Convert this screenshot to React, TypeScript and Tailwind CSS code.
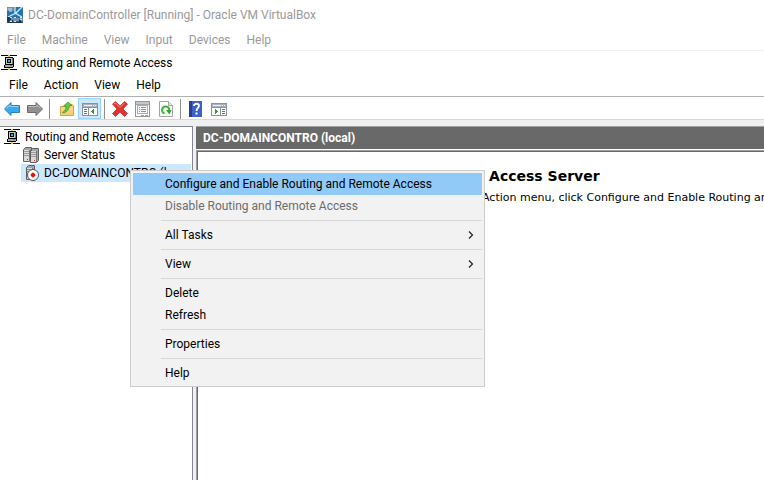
import React from "react";

const ui = "font-['Roboto','Open_Sans',sans-serif]";

function VmIcon() {
  return (
    <svg width="16" height="16" viewBox="0 0 16 16" aria-hidden="true">
      <rect width="16" height="16" rx="1" fill="#2574b0" />
      <path d="M0 0h7v4H0z" fill="#7890a2" />
      <path d="M1 2h4M2 4h3" stroke="#dbe6ee" />
      <path d="M15 0L9 6 1 10M8 0v6l7 4" stroke="#c8ecff" strokeWidth="1.300" fill="none" />
      <path d="M0 10h16v5a1 1 0 0 1-1 1H1a1 1 0 0 1-1-1z" fill="#1a3a5a" />
      <path d="M3 10.500h2v2l-2 2h2M7 10.500h2v4H7zM11 10.500v4M15 14.500v-4h-2v2h2" stroke="#dbe7f0" strokeWidth="1" fill="none" />
    </svg>
  );
}

function RouterIcon() {
  return (
    <svg width="16" height="16" viewBox="0 0 16 16" shapeRendering="crispEdges" aria-hidden="true">
      <path d="M0 0h16v1H0zM0 14h16v1H0z" fill="#000" />
      <path d="M7 0h2v2H7zM7 13h2v2H7z" fill="#ead200" />
      <path d="M4 2h8v1h1v9h-1v1H3v-3h1z" fill="#000" />
      <path d="M5 3h6v6H5z" fill="#c4c9c9" />
      <path d="M6 4h4v4H6z" fill="#000" />
      <path d="M7 5h2v2H7z" fill="#18c5bd" />
      <path d="M11 3h1v6h-1z" fill="#777" />
      <path d="M4 10h8v2H4z" fill="#a9a9a9" />
      <path d="M9 10h2v1H9z" fill="#43a043" />
    </svg>
  );
}

function ServersIcon() {
  return (
    <svg width="16" height="16" viewBox="0 0 16 16" aria-hidden="true">
      <path d="M.5 2.500L2.500.500h6v12l-2 2h-6zM7.500 3.500l2-2h6v12l-2 2h-6z" fill="#a5a5a5" stroke="#606060" />
      <path d="M1 3h5v11H1zM8 4h5v11H8z" fill="#dadada" />
      <path d="M1 4.500h5M1 6.500h5M1 8.500h5M8 5.500h5M8 7.500h5M8 9.500h5" stroke="#9a9a9a" />
      <path d="M6.500 3v11M13.500 4v11" stroke="#777" />
      <path d="M4 12h1v1H4zM11 13h1v1h-1z" fill="#d33030" />
    </svg>
  );
}

function StoppedServerIcon() {
  return (
    <svg width="16" height="16" viewBox="0 0 16 16" aria-hidden="true">
      <path d="M3.500 2.500l2-2h6v12l-2 2h-6z" fill="#a5a5a5" stroke="#606060" />
      <path d="M4 3h5v11H4z" fill="#dadada" />
      <path d="M4 4.500h5M4 6.500h5" stroke="#888" />
      <path d="M9.500 3v5" stroke="#777" />
      <circle cx="10" cy="10" r="5.500" fill="#fff" stroke="#555" strokeWidth="1" />
      <path d="M9 8h2v1h1v2h-1v1H9v-1H8V9h1z" fill="#ee1010" stroke="#ee1010" strokeWidth=".5" />
    </svg>
  );
}

function ArrowIcon({ forward = false }: { forward?: boolean }) {
  return (
    <svg width="16" height="16" viewBox="0 0 16 16" aria-hidden="true">
      <path
        d={forward ? "M15.500 8L9 1.500v3H.500v7H9v3z" : "M.500 8L7 1.500v3h8.500v7H7v3z"}
        fill={forward ? "#919191" : "#38a9ec"}
        stroke={forward ? "#6a6a6a" : "#2f7fbe"}
      />
      <path
        d={forward ? "M1.500 5.500H10V4L13.500 7.500" : "M2.500 7.500L6 4v1.500h8.500"}
        fill="none"
        stroke={forward ? "#bcbcbc" : "#8ad7fb"}
      />
    </svg>
  );
}

function FolderUpIcon() {
  return (
    <svg width="16" height="16" viewBox="0 0 16 16" aria-hidden="true">
      <path d="M1.500 5.500h6l1-2h5l1 1v10h-13z" fill="#f3d27a" stroke="#cda550" />
      <path d="M2 8h12" stroke="#fbe6a2" />
      <path d="M3.500 11.500C6 10 7 8 7 5H4.500l4.500-4L13 4.500h-2.500C10.500 8 8 11 4.500 12z" fill="#62c940" stroke="#389428" strokeWidth=".7" />
    </svg>
  );
}

function PaneIcon({ mirrored = false }: { mirrored?: boolean }) {
  return (
    <svg width="16" height="14" viewBox="0 0 16 14" shapeRendering="crispEdges" aria-hidden="true">
      <path d="M.5 1.500h15v12H.5z" fill="#fff" stroke="#8a929c" />
      <path d="M1 2h14v3H1z" fill="#a9b3bd" />
      <path d="M2 3.500h8M11 3.500h1M13 3.500h1" stroke="#eef2f5" />
      <path d="M0 5.500h16" stroke="#8a929c" />
      {mirrored ? (
        <>
          <path d="M9.500 6v7" stroke="#8b93a0" />
          <path d="M11 7.500h3M11 9.500h3M11 11.500h3" stroke="#3878c0" />
          <path d="M4 7v5l3-2.500z" fill="#27a427" />
        </>
      ) : (
        <>
          <path d="M6.500 6v7" stroke="#8b93a0" />
          <path d="M2 7.500h3M2 9.500h3M2 11.500h3" stroke="#3878c0" />
          <path d="M12 7v5L9 9.500z" fill="#27a427" />
        </>
      )}
    </svg>
  );
}

function DeleteIcon() {
  return (
    <svg width="16" height="16" viewBox="0 0 16 16" aria-hidden="true">
      <path d="M.5 3L3.500.500 8 5l4.500-4.500L15.500 3 11 8l4.500 4.500-3 3L8 11l-4.500 4.500-3-3L5 8z" fill="#e0332c" stroke="#b92020" strokeWidth=".7" />
      <path d="M2 3l1.500-1L8 6.500 12.500 2" stroke="#f58a7e" fill="none" />
    </svg>
  );
}

function PropertiesIcon() {
  return (
    <svg width="16" height="16" viewBox="0 0 16 16" shapeRendering="crispEdges" aria-hidden="true">
      <path d="M.500.500h14v15h-14z" fill="#fff" stroke="#959595" />
      <path d="M1 1h13v2H1z" fill="#c5c9cc" />
      <path d="M1 3.500h13" stroke="#a2a7ab" />
      <path d="M2.500 4.500h10v8h-10z" fill="#f5f6f7" stroke="#a6adb3" />
      <path d="M4 6.500h1M6 6.500h5M4 8.500h1M6 8.500h5M4 10.500h1M6 10.500h5" stroke="#8495a3" />
      <path d="M6 14.500h3M10 14.500h3" stroke="#63b9e5" />
    </svg>
  );
}

function RefreshIcon() {
  return (
    <svg width="14" height="16" viewBox="0 0 14 16" aria-hidden="true">
      <path d="M.5.500h9l4 4v11H.5z" fill="#fff" stroke="#a3a3a3" />
      <path d="M9.500.500v4h4" fill="#e8e8e8" stroke="#a3a3a3" />
      <path d="M5.500 12.500A3.600 3.600 0 1 1 10.300 9" fill="none" stroke="#3cb53a" strokeWidth="2" />
      <path d="M7 9h5.500l-2 4.500z" fill="#2ca72d" />
    </svg>
  );
}

function HelpIcon() {
  return (
    <svg width="13" height="16" viewBox="0 0 13 16" aria-hidden="true">
      <path d="M0 0h13v16H0z" fill="#3b62c4" />
      <path d="M0 0h3v16H0z" fill="#26408e" />
      <path d="M5 5c0-3 5-3 5 0 0 2-2.500 2-2.500 5" fill="none" stroke="#fff" strokeWidth="1.800" />
      <path d="M6.500 11.500h2v2h-2z" fill="#fff" />
    </svg>
  );
}

function ToolButton({ label, active = false, children }: { label: string; active?: boolean; children: React.ReactNode }) {
  return (
    <button
      aria-label={label}
      className={
        active
          ? "flex h-[21px] w-[23px] items-center justify-center border border-[#99d1ff] bg-[#cce8ff]"
          : "flex h-[21px] w-[23px] items-center justify-center"
      }
    >
      {children}
    </button>
  );
}

function ToolDivider() {
  return <div className="mx-[3px] h-5 w-px bg-[#8d8d8d]" />;
}

function MenuItem({ label, state, submenu = false }: { label: string; state?: "hover" | "disabled"; submenu?: boolean }) {
  return (
    <button
      role="menuitem"
      disabled={state === "disabled"}
      className={
        "flex h-[22px] w-full items-center justify-between pl-8 pr-2 text-left whitespace-nowrap " +
        (state === "hover" ? "bg-[#91c9f7]" : state === "disabled" ? "text-[#6d6d6d]" : "")
      }
    >
      {label}
      {submenu && (
        <svg width="6" height="8" viewBox="0 0 6 8" aria-hidden="true">
          <path d="M1 .500L4.500 4 1 7.500" fill="none" stroke="#222" strokeWidth="1.200" />
        </svg>
      )}
    </button>
  );
}

function Separator() {
  return <div role="separator" className="ml-7 h-[7px] py-[3px]"><div className="h-px bg-[#d7d7d7]" /></div>;
}

export default function App() {
  return (
    <div className={`relative flex min-h-screen flex-col overflow-hidden bg-white text-[12px] leading-4 text-black ${ui}`}>
      <header className="text-[#999999]">
        <div className="flex h-[30px] items-center gap-[5px] pl-[7px]">
          <VmIcon />
          <span>DC-DomainController [Running] - Oracle VM VirtualBox</span>
        </div>
        <nav aria-label="Virtual machine" className="flex h-[21px] items-center gap-4 border-b border-[#f0f0f0] pl-[7px]">
          {["File", "Machine", "View", "Input", "Devices", "Help"].map((m) => (
            <button key={m}>{m}</button>
          ))}
        </nav>
      </header>

      <div className="flex h-[23px] items-center gap-[5px] pl-px">
        <RouterIcon />
        <span>Routing and Remote Access</span>
      </div>
      <nav aria-label="Console" className="flex h-[22px] items-center gap-4 pl-[9px]">
        {["File", "Action", "View", "Help"].map((m) => (
          <button key={m}>{m}</button>
        ))}
      </nav>

      <div role="toolbar" className="flex h-6 items-end border-y border-t-[#b0b0b0] border-b-[#d8d8d8]">
        <ToolButton label="Back"><ArrowIcon /></ToolButton>
        <ToolButton label="Forward"><ArrowIcon forward /></ToolButton>
        <ToolDivider />
        <div className="flex pl-[2px]">
          <ToolButton label="Up one level"><FolderUpIcon /></ToolButton>
          <ToolButton label="Show console tree" active><PaneIcon /></ToolButton>
        </div>
        <div className="flex items-end">
          <ToolDivider />
          <ToolButton label="Delete"><DeleteIcon /></ToolButton>
          <ToolButton label="Properties"><PropertiesIcon /></ToolButton>
          <ToolButton label="Refresh"><RefreshIcon /></ToolButton>
        </div>
        <ToolDivider />
        <ToolButton label="Help"><HelpIcon /></ToolButton>
        <ToolButton label="Show action pane"><PaneIcon mirrored /></ToolButton>
      </div>

      <div className="flex flex-1 gap-[3px] bg-[#f0f0f0] pt-[6px]">
        <aside className="w-[193px] shrink-0 border-t border-r border-[#828790] bg-white pt-px">
          <ul role="tree">
            <li role="treeitem" className="flex h-[18px] items-center gap-[5px] pl-1"><RouterIcon />Routing and Remote Access</li>
            <li role="treeitem" className="flex h-[18px] items-center gap-[5px] pl-[23px]"><ServersIcon />Server Status</li>
            <li role="treeitem" aria-selected="true" className="ml-[21px] mr-px flex h-[18px] items-center gap-[5px] bg-[#cce8ff] pl-[2px] pr-2">
              <span className="shrink-0"><StoppedServerIcon /></span>
              <span className="truncate">DC-DOMAINCONTRO (local)</span>
            </li>
          </ul>
        </aside>

        <main className="flex min-w-0 flex-1 flex-col">
          <h1 className="flex h-[23px] items-center border-t border-[#a0a0a0] bg-[#696969] pl-[7px] font-bold text-white">
            DC-DOMAINCONTRO (local)
          </h1>
          <div className="flex flex-1 border-t border-white">
            <div className="min-w-0 flex-1 border-t border-l border-[#a0a0a0]">
              <div className="h-full overflow-hidden border-t border-l border-[#696969] bg-white pl-3 pt-4 font-['DejaVu_Sans',sans-serif] whitespace-nowrap">
                <h2 className="text-[14px] leading-4 font-bold">Configure the Routing and Remote Access Server</h2>
                <p className="pt-1.5 pl-5 text-[11px] leading-4">
                  To set up Routing and Remote Access, on the Action menu, click Configure and Enable Routing and Remote Access.
                </p>
              </div>
            </div>
          </div>
        </main>
      </div>

      <div role="menu" className="absolute top-[170px] left-[130px] w-[355px] border border-[#cccccc] bg-[#f2f2f2] p-[2px]">
        <MenuItem label="Configure and Enable Routing and Remote Access" state="hover" />
        <MenuItem label="Disable Routing and Remote Access" state="disabled" />
        <Separator />
        <MenuItem label="All Tasks" submenu />
        <Separator />
        <MenuItem label="View" submenu />
        <Separator />
        <MenuItem label="Delete" />
        <MenuItem label="Refresh" />
        <Separator />
        <MenuItem label="Properties" />
        <Separator />
        <MenuItem label="Help" />
      </div>
    </div>
  );
}
